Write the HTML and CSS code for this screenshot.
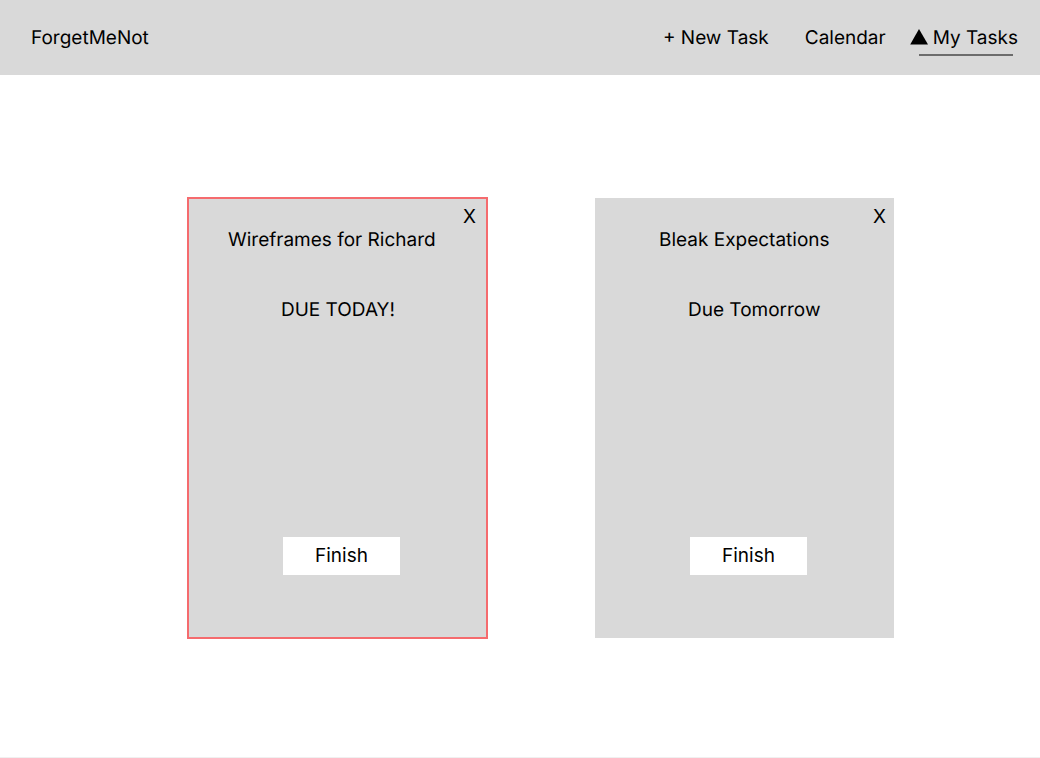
FILE: index.html
```html
<!DOCTYPE html>
<html lang="en">
<head>
<meta charset="utf-8">
<title>ForgetMeNot</title>
<link rel="stylesheet" href="styles.css">
</head>
<body>
<header class="topbar">
  <a class="brand" href="#">ForgetMeNot</a>
  <nav class="nav">
    <a class="nav-link" href="#">+ New Task</a>
    <a class="nav-link" href="#">Calendar</a>
    <a class="nav-link nav-current" href="#" aria-current="page">
      <svg class="marker" viewBox="0 0 18 16" aria-hidden="true"><path d="M9 0 18 15.5H0.2Z"/></svg>
      My Tasks
    </a>
  </nav>
</header>
<main class="board">
  <article class="card card-urgent">
    <button class="close" type="button">X</button>
    <h2 class="title">Wireframes for Richard</h2>
    <p class="due">DUE TODAY!</p>
    <button class="finish" type="button">Finish</button>
  </article>
  <article class="card">
    <button class="close" type="button">X</button>
    <h2 class="title">Bleak Expectations</h2>
    <p class="due">Due Tomorrow</p>
    <button class="finish" type="button">Finish</button>
  </article>
</main>
</body>
</html>
```
FILE: styles.css
```css
* { box-sizing: border-box; }
body {
  margin: 0;
  min-height: 100vh;
  display: flex;
  flex-direction: column;
  background: #fff;
  border-bottom: 1px solid #f0f0f0;
  color: #000;
  font: 19px/24px Inter, sans-serif;
  text-rendering: geometricPrecision;
}
a { color: inherit; text-decoration: none; }
button { font: inherit; color: inherit; border: 0; padding: 0; }
.topbar {
  display: flex;
  justify-content: space-between;
  padding: 26px 22px 19px 31px;
  background: #d9d9d9;
}
.nav { display: flex; }
.nav-link { margin-right: 36px; }
.nav-current {
  display: flex;
  gap: 5px;
  margin: 0 0 0 -12px;
  padding-bottom: 6px;
  background: linear-gradient(#6c6c6c, #6c6c6c) right 5px bottom 0 / 94px 2px no-repeat;
}
.marker { width: 18px; height: 16px; margin-top: 3px; }
.board {
  display: grid;
  grid-template-columns: 299px 299px;
  justify-content: center;
  gap: 108px;
  padding: 123px 0 0 42px;
}
.card {
  display: flex;
  flex-direction: column;
  align-items: flex-start;
  padding: 8px 8px 63px 0;
  background: #d9d9d9;
}
.card-urgent {
  padding-right: 11px;
  outline: 2px solid #f56b6e;
  outline-offset: -1px;
}
.close { align-self: flex-end; background: none; line-height: 22px; }
.title { margin: 0 0 0 64px; font: inherit; }
.card-urgent .title { margin-left: 40px; }
.due { margin: 46px 0 215px 93px; }
.finish { width: 117px; height: 38px; margin-left: 95px; background: #fff; }
```
